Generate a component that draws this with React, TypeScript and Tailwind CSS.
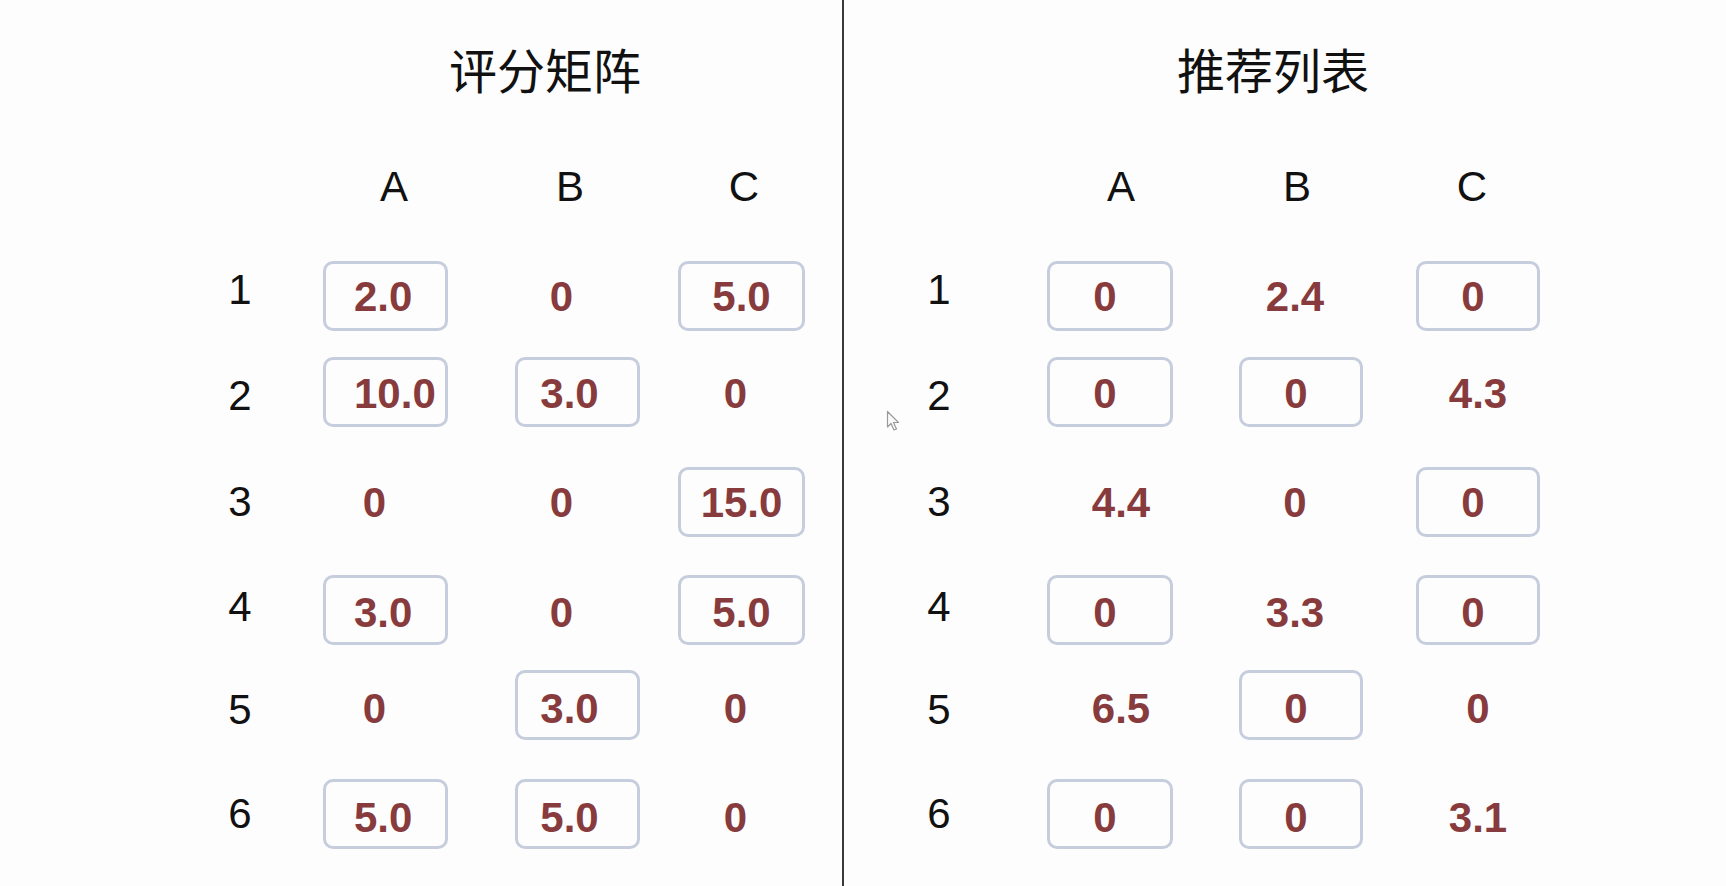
import React from 'react';

type Cell = [string, boolean];

interface PanelConfig {
  title: string;
  titleClass: string;
  headerClasses: string[];
  labelClass: string;
  cellClasses: string[];
  boxedAlign: string[];
  looseAlign: string[];
  rows: Cell[][];
}

// 行ごとの上マージン（ボックスの上端を揃えるため）
const rowMargins = ['mt-[53px]', 'mt-[26px]', 'mt-[40px]', 'mt-[38px]', 'mt-[25px]', 'mt-[39px]'];
// 行番号の微妙なずれ
const labelShifts = ['mb-[12px]', 'mt-[8px]', '', 'mb-[6px]', 'mt-[10px]', ''];
// 数値の縦方向のずれ
const valueShifts = ['pt-[2px]', 'pt-[4px]', 'pt-[2px]', 'pt-[5px]', 'pt-[7px]', 'pt-[7px]'];

const ratingPanel: PanelConfig = {
  title: '评分矩阵',
  titleClass: 'ml-[449px]',
  headerClasses: ['ml-[354px] w-[80px]', 'ml-[96px] w-[80px]', 'ml-[94px] w-[80px]'],
  labelClass: 'ml-[200px] w-[80px]',
  cellClasses: ['ml-[43px] w-[125px]', 'ml-[67px] w-[125px]', 'ml-[38px] w-[127px]'],
  boxedAlign: ['justify-start pl-[28px]', 'justify-center pr-[16px]', 'justify-center'],
  looseAlign: ['justify-center pr-[22px]', 'justify-center pr-[32px]', 'justify-center pr-[12px]'],
  rows: [
    [['2.0', true], ['0', false], ['5.0', true]],
    [['10.0', true], ['3.0', true], ['0', false]],
    [['0', false], ['0', false], ['15.0', true]],
    [['3.0', true], ['0', false], ['5.0', true]],
    [['0', false], ['3.0', true], ['0', false]],
    [['5.0', true], ['5.0', true], ['0', false]],
  ],
};

const recommendPanel: PanelConfig = {
  title: '推荐列表',
  titleClass: 'ml-[333px]',
  headerClasses: ['ml-[237px] w-[80px]', 'ml-[96px] w-[80px]', 'ml-[95px] w-[80px]'],
  labelClass: 'ml-[55px] w-[80px]',
  cellClasses: ['ml-[68px] w-[126px]', 'ml-[66px] w-[124px]', 'ml-[53px] w-[124px]'],
  boxedAlign: ['justify-center pr-[10px]', 'justify-center pr-[10px]', 'justify-center pr-[10px]'],
  looseAlign: ['justify-center pl-[22px]', 'justify-center pr-[12px]', 'justify-center'],
  rows: [
    [['0', true], ['2.4', false], ['0', true]],
    [['0', true], ['0', true], ['4.3', false]],
    [['4.4', false], ['0', false], ['0', true]],
    [['0', true], ['3.3', false], ['0', true]],
    [['6.5', false], ['0', true], ['0', false]],
    [['0', true], ['0', true], ['3.1', false]],
  ],
};

function Panel({ config, className }: { config: PanelConfig; className: string }) {
  return (
    <div className={`flex flex-col ${className}`}>
      <div className="flex pt-[44px]">
        <div
          className={`${config.titleClass} h-[48px] text-[48px] leading-none text-[#111] font-['Noto_Sans_CJK_SC',sans-serif]`}
        >
          {config.title}
        </div>
      </div>

      <div className="mt-[74px] flex text-[42px] leading-none text-[#111]">
        {['A', 'B', 'C'].map((h, i) => (
          <div key={h} className={`${config.headerClasses[i]} text-center`}>
            {h}
          </div>
        ))}
      </div>

      {config.rows.map((row, r) => (
        <div key={r} className={`${rowMargins[r]} flex h-[70px] items-center`}>
          <div className={`${config.labelClass} ${labelShifts[r]} text-center text-[42px] leading-none text-[#111]`}>
            {r + 1}
          </div>
          {row.map(([value, boxed], c) => (
            <div
              key={c}
              className={`${config.cellClasses[c]} flex h-[70px] items-center rounded-[10px] border-[3px] ${
                boxed ? `border-[#c6cddd] ${config.boxedAlign[c]}` : `border-transparent ${config.looseAlign[c]}`
              }`}
            >
              <span className={`${valueShifts[r]} text-[42px] font-bold leading-none text-[#873b3d]`}>{value}</span>
            </div>
          ))}
        </div>
      ))}
    </div>
  );
}

export default function App() {
  return (
    <div className="relative flex h-[886px] w-[1726px] overflow-hidden bg-[#fdfdfd] font-['Liberation_Sans',Arial,sans-serif]">
      <Panel config={ratingPanel} className="w-[842px] shrink-0" />
      <div className="h-full w-[2px] shrink-0 bg-[#3a3a3a]" />
      <Panel config={recommendPanel} className="flex-1" />

      {/* マウスカーソル */}
      <svg className="absolute left-[886px] top-[410px]" width="14" height="22" viewBox="0 0 14 22">
        <path
          d="M1.5 1.5 L1.5 17 L5 13.5 L8 20 L10.5 19 L7.5 12.5 L12.5 12.5 Z"
          fill="#fafafa"
          stroke="#9a9a9a"
          strokeWidth="1.2"
          strokeLinejoin="round"
        />
      </svg>
    </div>
  );
}
